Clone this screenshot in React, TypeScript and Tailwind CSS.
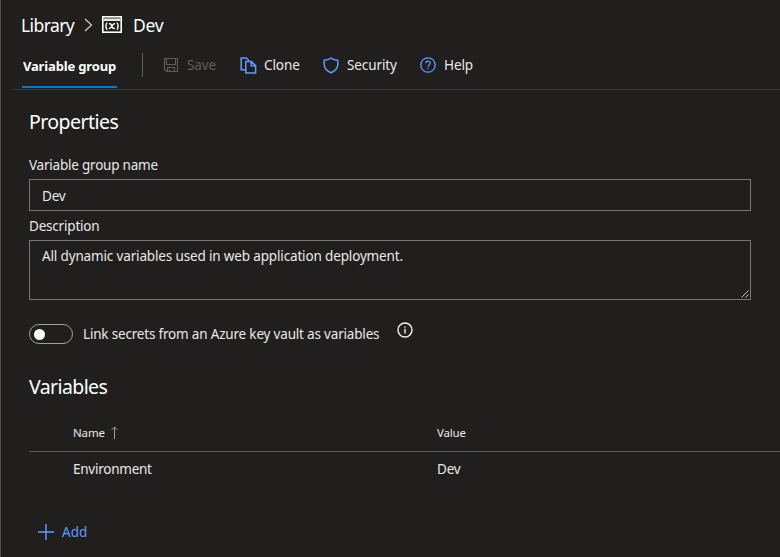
import React from "react";

function ChevronIcon() {
  return (
    <svg width="9" height="14" viewBox="0 0 9 14" fill="none" stroke="#d0cecc" strokeWidth="1.2">
      <path d="M1 1 L7.5 7 L1 13" />
    </svg>
  );
}

function VariableGroupIcon() {
  return (
    <svg width="20" height="17" viewBox="0 0 20 17" fill="none" stroke="#ffffff">
      <rect x="0.8" y="0.8" width="18.4" height="15.4" strokeWidth="1.6" />
      <path d="M1.6 2.5H18.4" stroke="#8a8886" strokeWidth="1" />
      <path d="M1.6 4H18.4" strokeWidth="1.8" />
      <path d="M5 6.5Q2.8 10 5 13.6M15 6.5Q17.2 10 15 13.6" strokeWidth="1.4" />
      <path d="M7 7.9Q8.8 7 9.6 9.9T12.8 12.5M13 7.8Q11.4 7.2 10 10T6.8 12.5" strokeWidth="1.5" />
    </svg>
  );
}

function SaveIcon() {
  return (
    <svg width="16" height="16" viewBox="0 0 16 16" fill="none" stroke="#605e5c" strokeWidth="1.1">
      <path d="M1.5 1.5H14.5V14.5H3.5L1.5 12.5Z" />
      <path d="M3.5 1.5V7.5H12.5V1.5M4.5 14.5V10.5H11.5V14.5M6.5 14.5V12.5" />
    </svg>
  );
}

function CloneIcon() {
  return (
    <svg width="17" height="17" viewBox="0 0 17 17" fill="none" stroke="#5c9dff" strokeWidth="1.5">
      <path d="M5.2 12.8H1.2V1H6.4L9 3.8" />
      <path d="M5.8 4.4H11.4L15.6 8.6V16H5.8ZM11.2 4.6V8.8H15.4" />
    </svg>
  );
}

function ShieldIcon() {
  return (
    <svg width="16" height="17" viewBox="0 0 16 17" fill="none" stroke="#5c9dff" strokeWidth="1.5">
      <path d="M8 1.2C6 2.6 4 3.2 1.2 3.2V7.5C1.2 11.2 4 14 8 15.7C12 14 14.8 11.2 14.8 7.5V3.2C12 3.2 10 2.6 8 1.2Z" />
    </svg>
  );
}

function HelpIcon() {
  return (
    <svg width="16" height="16" viewBox="0 0 16 16" fill="none" stroke="#5c9dff" strokeWidth="1.3">
      <circle cx="8" cy="8" r="7.2" />
      <path d="M5.8 6.3C5.8 3.3 10.2 3.3 10.2 6.2C10.2 7.8 8 8 8 10M8 11V12.3" />
    </svg>
  );
}

function InfoIcon() {
  return (
    <svg width="16" height="16" viewBox="0 0 16 16" fill="none" stroke="#f3f2f1" strokeWidth="1.4">
      <circle cx="8" cy="8" r="7" />
      <path d="M8 6.8V11.5M8 4.5V5.8" />
    </svg>
  );
}

export default function App() {
  return (
    <div className="h-[557px] w-[780px] overflow-hidden border-l border-[#53514f] bg-[#201f1e] font-['Noto_Sans','Open_Sans',sans-serif] text-[13.5px] leading-5 tracking-[-0.165px] whitespace-nowrap text-[#eae8e6]">
      <header className="flex h-[50px] items-center pb-px pl-5 text-[17.5px] leading-6 text-white">
        <span className="w-[54px] tracking-[-0.6px]">Library</span>
        <span className="ml-[9px]"><ChevronIcon /></span>
        <span className="ml-[9px]"><VariableGroupIcon /></span>
        <span className="ml-[11px] tracking-[-0.3px]">Dev</span>
      </header>
      <nav className="ml-3 flex h-10 border-b border-[#3b3a39]">
        <div className="ml-[9px] flex h-[38px] w-[95px] items-center justify-center border-b-2 border-[#0078d4] pb-[5px] text-[13px] font-bold tracking-[-0.15px] text-white">
          <span>Variable group</span>
        </div>
        <div className="mt-[3px] ml-[25px] h-6 w-px bg-[#605e5c]" />
        <div className="flex h-[30px] items-center">
          <span className="ml-5"><SaveIcon /></span>
          <span className="ml-2 w-[29px] tracking-[-0.1px] text-[#605e5c]">Save</span>
          <span className="ml-6"><CloneIcon /></span>
          <span className="ml-[7px] w-[35px] tracking-[-0.1px]">Clone</span>
          <span className="ml-6"><ShieldIcon /></span>
          <span className="ml-2 w-[49px] tracking-[-0.1px]">Security</span>
          <span className="ml-6"><HelpIcon /></span>
          <span className="ml-2 tracking-[-0.1px]">Help</span>
        </div>
      </nav>
      <main className="pl-7">
        <h2 className="pt-[19px] text-[19.5px] leading-[26px] tracking-[-0.55px] text-white">Properties</h2>
        <div className="mt-5 tracking-[-0.22px]">Variable group name</div>
        <div className="mt-1 flex h-8 w-[722px] items-center border border-[#797775] pt-0.5 pl-3">Dev</div>
        <div className="mt-[5px] tracking-[-0.2px]">Description</div>
        <div className="mt-1 flex h-[60px] w-[722px] items-start justify-between border border-[#797775] pt-[5px] pl-3">
          <span className="tracking-[-0.15px]">All dynamic variables used in web application deployment.</span>
          <svg className="mr-px mb-px self-end" width="8" height="8" viewBox="0 0 8 8" stroke="#c8c6c4" strokeWidth="1">
            <path d="M0.5 7.5L7.5 0.5M4.5 7.5L7.5 4.5" />
          </svg>
        </div>
        <div className="mt-6 flex h-5 items-center">
          <div className="flex h-5 w-11 items-center rounded-full border border-[#a19f9d] pl-1">
            <div className="size-[11px] rounded-full bg-white" />
          </div>
          <span className="ml-[10px] w-[297px] tracking-[-0.185px]">Link secrets from an Azure key vault as variables</span>
          <span className="ml-[17px] pb-[9px]"><InfoIcon /></span>
        </div>
        <h2 className="mt-[30px] text-[19.5px] leading-[26px] tracking-[-0.6px] text-white">Variables</h2>
        <div className="mt-[23px] flex h-[29px] border-b border-[#605e5c] pl-11 text-[11.5px]">
          <span className="w-8 tracking-[-0.15px]">Name</span>
          <svg className="mt-[3px] ml-[5px]" width="8" height="13" viewBox="0 0 8 13" fill="none" stroke="#a19f9d">
            <path d="M4.5 13V1M1.5 4L4.5 1L7.5 4" />
          </svg>
          <span className="ml-[319px]">Value</span>
        </div>
        <div className="flex h-[34px] items-center pl-11">
          <span className="w-[364px] tracking-[-0.25px]">Environment</span>
          <span>Dev</span>
        </div>
        <div className="mt-9 flex items-center pl-[9px] text-[#5c9dff]">
          <svg width="16" height="16" viewBox="0 0 16 16" stroke="#5c9dff" strokeWidth="1.4">
            <path d="M8 0V16M0 8H16" />
          </svg>
          <span className="ml-2 tracking-normal">Add</span>
        </div>
      </main>
    </div>
  );
}
